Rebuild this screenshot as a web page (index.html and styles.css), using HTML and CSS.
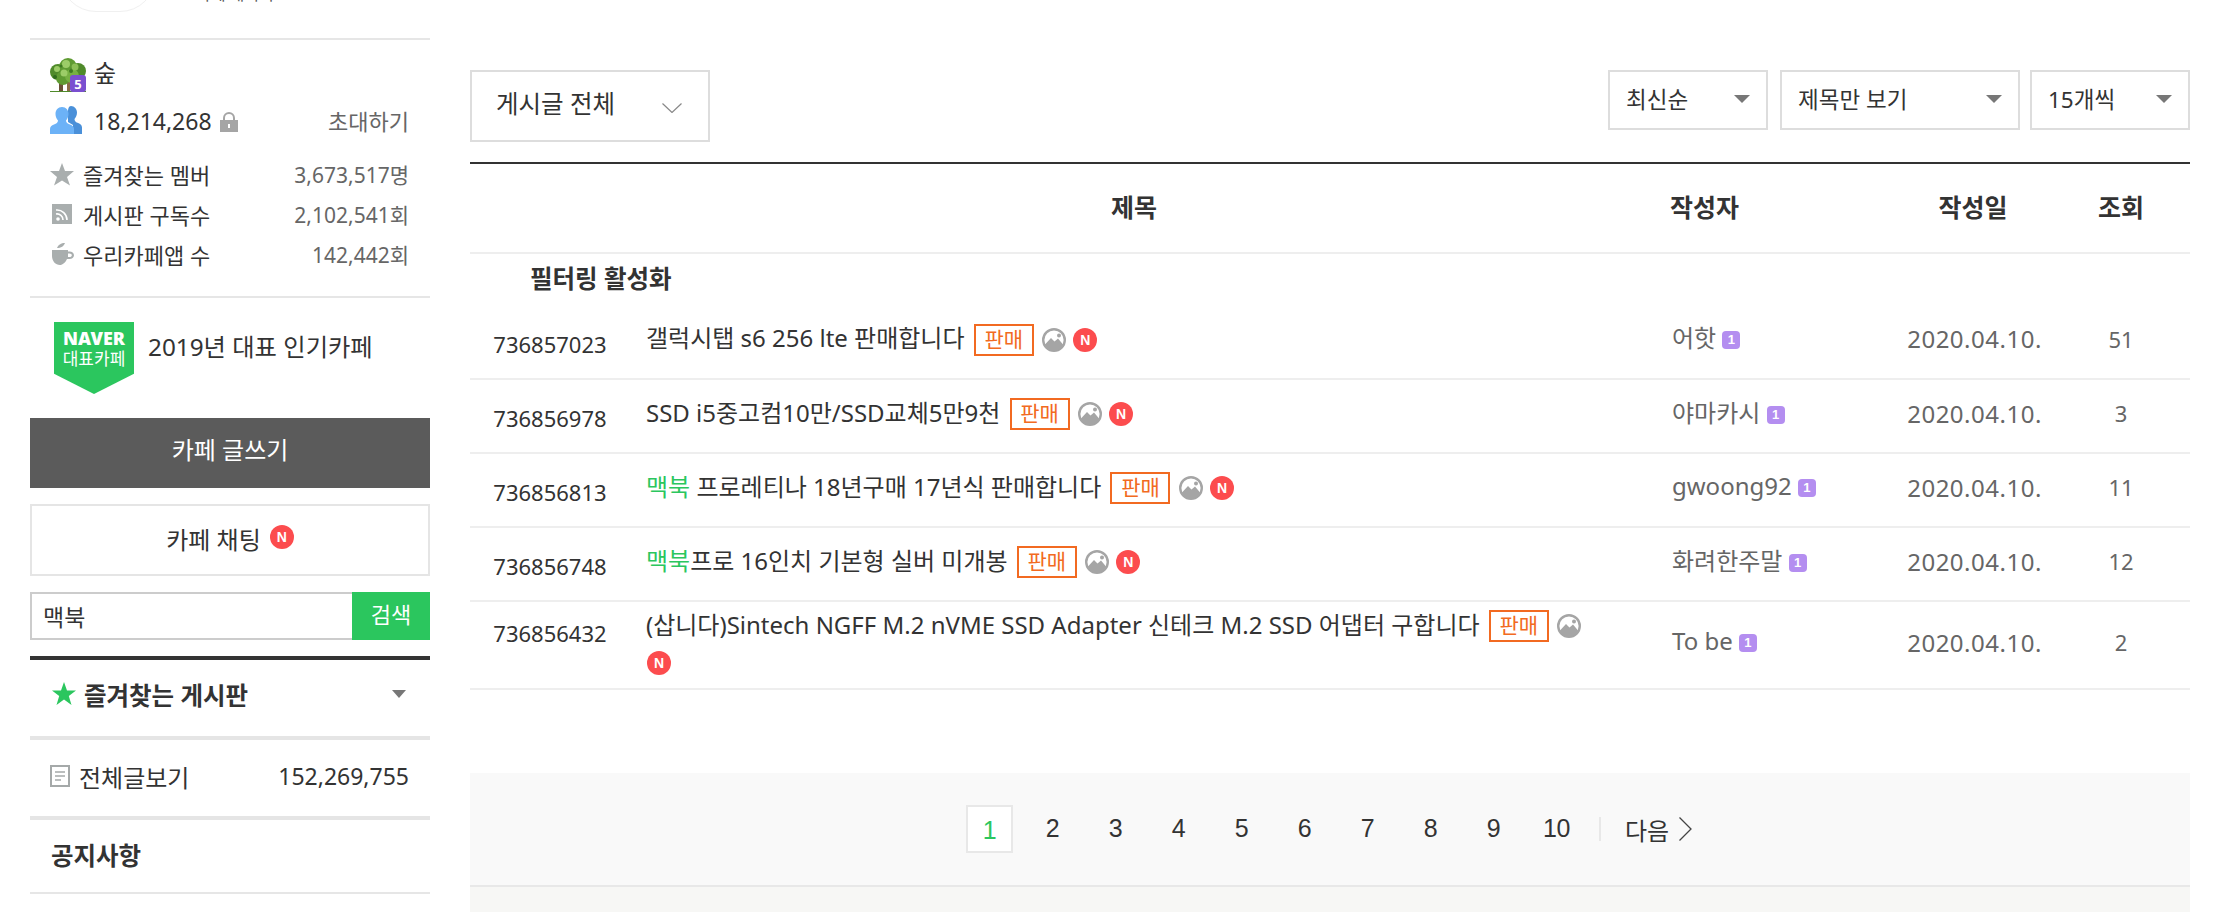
FILE: index.html
```html
<!DOCTYPE html>
<html lang="ko">
<head>
<meta charset="utf-8">
<title>게시글 목록</title>
<link rel="stylesheet" href="styles.css">
</head>
<body>
<div class="page">
  <aside class="side">
    <div class="cafe-top">
      <div class="avatar"></div>
      <div class="cafe-name">카페 매니저</div>
    </div>
    <section class="info">
      <div class="rank">
        <svg class="tree" viewBox="0 0 36 34">
          <rect x="9" y="22" width="4" height="12" fill="#6b5138"/><rect x="17" y="24" width="3" height="10" fill="#8a6a48"/>
          <circle cx="8" cy="14" r="8" fill="#4f8a2a"/><circle cx="18" cy="9" r="9" fill="#5f9b32"/><circle cx="28" cy="13" r="8" fill="#4f8a2a"/><circle cx="13" cy="20" r="7" fill="#5f9b32"/><circle cx="22" cy="18" r="7" fill="#77b043"/>
          <circle cx="16" cy="6" r="4" fill="#9ccc68"/><circle cx="7" cy="11" r="3" fill="#9ccc68"/><circle cx="25" cy="9" r="3.500" fill="#8cc057"/><circle cx="14" cy="15" r="3.500" fill="#9ccc68"/><circle cx="5" cy="19" r="2" fill="#2f6b1c"/><circle cx="21" cy="13" r="2" fill="#3f7a22"/><circle cx="11" cy="8" r="1.500" fill="#3f7a22"/>
          <rect y="33" width="36" height="1" fill="#4f8a2a"/>
          <rect x="20" y="17" width="16" height="17" rx="3" fill="#7a4fd0"/>
          <text x="28" y="31" class="tree-num">5</text>
        </svg>
        <span>숲</span>
      </div>
      <div class="members">
        <svg class="people" viewBox="0 0 32 28">
          <path d="M21 0c3.500 0 6 3 6 6.500 0 3-1.200 5-2.500 6.500 0 2 1 3 3 3.800 2.500 1 4.500 2 4.500 4.700V28h-9V19l-5-3V6.500C18 3 18.500 0 21 0z" fill="#4a90d9"/>
          <path d="M12 1c4 0 6.500 3 6.500 7 0 3-1.200 5-2.500 6.500 0 2 1.500 3 4 4 2.500 1 4 2.200 4 4.500V28H0v-5c0-2.300 1.500-3.500 4-4.500 2.500-1 4-2 4-4C6.700 13 5.500 11 5.500 8c0-4 2.500-7 6.500-7z" fill="#6cb2f7"/>
        </svg>
        <span class="count">18,214,268</span>
        <svg class="lock" viewBox="0 0 18 20">
          <path d="M4 9V6a5 5 0 0 1 10 0v3" fill="none" stroke="#a5a5a5" stroke-width="2"/>
          <path d="M0 8h18v12H0z" fill="#a5a5a5"/><rect x="8" y="12" width="2" height="4" fill="#fff"/>
        </svg>
        <span class="invite">초대하기</span>
      </div>
      <ul class="stats">
        <li>
          <svg class="stat-ico" viewBox="0 0 24 24"><path d="M12 1l3 8h9l-7 6 3 8.500-8-5-8 5 3-8.500-7-6h9z" fill="#a9aeae"/></svg>
          <span class="stat-label">즐겨찾는 멤버</span><span class="stat-val">3,673,517명</span>
        </li>
        <li>
          <svg class="stat-ico" viewBox="0 0 24 24"><rect x="2" y="2" width="20" height="20" fill="#a9aeae"/><circle cx="8" cy="17" r="1.800" fill="#fff"/><path d="M6 12a6 6 0 0 1 7 6M6 8a10 10 0 0 1 11 10" fill="none" stroke="#fff" stroke-width="1.600"/></svg>
          <span class="stat-label">게시판 구독수</span><span class="stat-val">2,102,541회</span>
        </li>
        <li>
          <svg class="stat-ico" viewBox="0 0 24 24"><path d="M7 6c1-3 4-5 8-5-1 3-4 5-8 5z" fill="#a9aeae"/><path d="M2 8h16v1.500h1.500c2.500 0 4.500 1.700 4.500 3.800S22 17 19.500 17H17c-1.500 3.500-4.500 6-7 6-4.500 0-8-4-8-9z" fill="#a9aeae"/><path d="M18 11.500h1.500c1.300 0 2.300.800 2.300 1.800s-1 1.800-2.300 1.800H18z" fill="#fff"/></svg>
          <span class="stat-label">우리카페앱 수</span><span class="stat-val">142,442회</span>
        </li>
      </ul>
    </section>
    <section class="award">
      <div class="ribbon"><b>NAVER</b><span>대표카페</span></div>
      <span class="award-text">2019년 대표 인기카페</span>
    </section>
    <a class="btn-write">카페 글쓰기</a>
    <a class="btn-chat">카페 채팅 <i class="new new-side">N</i></a>
    <form class="search">
      <input class="search-input" value="맥북">
      <span class="search-btn">검색</span>
    </form>
    <div class="fav-head">
      <svg class="fav-star" viewBox="0 0 24 24"><path d="M12 0l3 8.500h9l-7.200 5.500 2.700 9L12 17.500 4.500 23l2.700-9L0 8.500h9z" fill="#2bc65e"/></svg>
      <strong>즐겨찾는 게시판</strong>
      <i class="arrow fav-arrow"></i>
    </div>
    <div class="all-row">
      <svg class="doc" viewBox="0 0 20 22"><path d="M1 1h18v20H1z" fill="none" stroke="#a5a9a9" stroke-width="2"/><path d="M5 7h10M5 11h10M5 15h6" stroke="#a5a9a9" stroke-width="1.500"/></svg>
      <span class="all-label">전체글보기</span>
      <span class="all-val">152,269,755</span>
    </div>
    <div class="notice">공지사항</div>
  </aside>

  <main class="main">
    <div class="toolbar">
      <div class="sel-big">
        <span>게시글 전체</span>
        <svg class="chev" viewBox="0 0 20 10"><path d="M.5.500 10 9.500 19.500.500" fill="none" stroke="#888" stroke-width="1.200"/></svg>
      </div>
      <div class="sel-group">
        <div class="sel sel-a"><span>최신순</span><i class="arrow"></i></div>
        <div class="sel sel-b"><span>제목만 보기</span><i class="arrow"></i></div>
        <div class="sel sel-c"><span>15개씩</span><i class="arrow"></i></div>
      </div>
    </div>
    <table class="list">
      <colgroup><col class="c-num"><col class="c-title"><col class="c-author"><col class="c-date"><col class="c-views"></colgroup>
      <thead>
        <tr><th></th><th class="th-title">제목</th><th class="th-author">작성자</th><th>작성일</th><th>조회</th></tr>
      </thead>
      <tbody>
        <tr class="filter"><td></td><td colspan="4"><strong class="filter-label">필터링 활성화</strong></td></tr>
        <tr>
          <td class="num">736857023</td>
          <td class="title">갤럭시탭 s6 256 lte 판매합니다 <span class="tag">판매</span> <svg class="pic" viewBox="0 0 24 24"><use href="#pic"/></svg> <i class="new">N</i></td>
          <td class="author">어핫 <i class="lv">1</i></td><td class="date">2020.04.10.</td><td class="views">51</td>
        </tr>
        <tr>
          <td class="num">736856978</td>
          <td class="title">SSD i5중고컴10만/SSD교체5만9천 <span class="tag">판매</span> <svg class="pic" viewBox="0 0 24 24"><use href="#pic"/></svg> <i class="new">N</i></td>
          <td class="author">야마카시 <i class="lv">1</i></td><td class="date">2020.04.10.</td><td class="views">3</td>
        </tr>
        <tr>
          <td class="num">736856813</td>
          <td class="title"><em class="hl">맥북</em> 프로레티나 18년구매 17년식 판매합니다 <span class="tag">판매</span> <svg class="pic" viewBox="0 0 24 24"><use href="#pic"/></svg> <i class="new">N</i></td>
          <td class="author">gwoong92 <i class="lv">1</i></td><td class="date">2020.04.10.</td><td class="views">11</td>
        </tr>
        <tr>
          <td class="num">736856748</td>
          <td class="title"><em class="hl">맥북</em>프로 16인치 기본형 실버 미개봉 <span class="tag">판매</span> <svg class="pic" viewBox="0 0 24 24"><use href="#pic"/></svg> <i class="new">N</i></td>
          <td class="author">화려한주말 <i class="lv">1</i></td><td class="date">2020.04.10.</td><td class="views">12</td>
        </tr>
        <tr class="tall">
          <td class="num">736856432</td>
          <td class="title">(삽니다)Sintech NGFF M.2 nVME SSD Adapter 신테크 M.2 SSD 어댑터 구합니다 <span class="tag">판매</span> <svg class="pic" viewBox="0 0 24 24"><use href="#pic"/></svg> <i class="new">N</i></td>
          <td class="author">To be <i class="lv">1</i></td><td class="date">2020.04.10.</td><td class="views">2</td>
        </tr>
      </tbody>
    </table>
    <nav class="pager">
      <a class="cur">1</a><a>2</a><a>3</a><a>4</a><a>5</a><a>6</a><a>7</a><a>8</a><a>9</a><a>10</a>
      <span class="next">다음 <svg class="next-ico" viewBox="0 0 13 24"><path d="M.5.500 12 12 .5 23.500" fill="none" stroke="#444" stroke-width="1.300"/></svg></span>
    </nav>
    <div class="foot"></div>
  </main>
</div>
<svg class="defs" width="0" height="0"><defs><g id="pic"><circle cx="12" cy="12" r="10.800" fill="#fff" stroke="#a5a5a5" stroke-width="2.400"/><path d="M2.500 17 9 10l3.500 3.500L16 10.500l5.500 6.500A11 11 0 0 1 12 23a11 11 0 0 1-9.500-6z" fill="#a5a5a5"/><circle cx="17" cy="7.500" r="2" fill="#a5a5a5"/></g></defs></svg>
</body>
</html>
```

FILE: styles.css
```css
* { box-sizing: border-box; }
html, body { margin: 0; height: 912px; overflow: hidden; background: #fff; }
body { font-family: "Noto Sans", "Noto Sans CJK KR", sans-serif; color: #333; font-size: 24px; }
ul { list-style: none; margin: 0; padding: 0; }
i, em { font-style: normal; }
.defs { display: block; }
.page { display: flex; gap: 40px; padding-left: 30px; width: 2190px; height: 912px; }

/* sidebar */
.side { width: 400px; flex: none; }
.cafe-top { height: 40px; border-bottom: 2px solid #e6e6e6; overflow: hidden; display: flex; gap: 40px; padding-left: 30px; }
.avatar { width: 96px; height: 96px; margin-top: -84px; border-radius: 36px; border: 1px solid #f0f0f0; flex: none; }
.cafe-name { font-size: 16px; line-height: 16px; margin-top: -14px; color: #555; }
.info { height: 258px; border-bottom: 2px solid #e6e6e6; padding: 18px 21px 0 20px; }
.rank { display: flex; align-items: center; gap: 8px; height: 34px; line-height: 28px; }
.rank span { margin-top: -4px; }
.tree { width: 36px; height: 34px; flex: none; }
.tree-num { font: 700 13px "Noto Sans", sans-serif; fill: #fff; text-anchor: middle; }
.members { display: flex; align-items: center; height: 28px; margin-top: 14px; }
.count { font-size: 23px; margin-left: 12px; padding-top: 2px; }
.people { width: 32px; height: 28px; flex: none; }
.lock { width: 18px; height: 20px; margin: 4px 0 0 8px; flex: none; }
.invite { margin-left: auto; font-size: 22px; color: #666; }
.stats { margin-top: 20px; }
.stats li { display: flex; align-items: center; height: 40px; }
.stat-ico { width: 24px; height: 24px; flex: none; margin-right: 9px; }
.stat-label { font-size: 22px; }
.stat-val { margin-left: auto; font-size: 21px; color: #666; }
.award { display: flex; align-items: flex-start; gap: 14px; height: 120px; padding: 24px 0 0 24px; }
.ribbon { width: 80px; height: 72px; background: #2bc65e; color: #fff; display: flex; flex-direction: column; align-items: center; clip-path: polygon(0 0, 100% 0, 100% 72%, 50% 100%, 0 72%); }
.ribbon b { font-size: 18px; font-weight: 900; line-height: 16px; margin-top: 8px; }
.ribbon span { font-size: 17px; line-height: 20px; margin-top: 3px; white-space: nowrap; }
.award-text { line-height: 32px; margin-top: 9px; font-size: 24.300px; }
.btn-write { display: block; height: 70px; background: #5b5b5b; color: #fff; text-align: center; line-height: 64px; }
.btn-chat { display: flex; align-items: center; justify-content: center; gap: 8px; height: 72px; margin-top: 16px; border: 2px solid #e5e5e5; padding-bottom: 4px; }
.search { display: flex; height: 48px; margin: 16px 0 0; }
.search-input { flex: 1; min-width: 0; border: 2px solid #ccc; border-right: 0; padding: 0 11px; font: inherit; font-size: 23px; color: #333; outline: none; }
.search-btn { width: 78px; background: #2bc65e; color: #fff; text-align: center; line-height: 44px; font-size: 22px; }
.fav-head { display: flex; align-items: center; height: 84px; margin-top: 16px; border-top: 4px solid #333; border-bottom: 4px solid #e5e5e5; padding: 0 24px 8px 22px; }
.fav-star { width: 24px; height: 24px; margin-right: 8px; flex: none; }
.fav-head strong { font-weight: 700; font-size: 24.500px; }
.arrow { width: 0; height: 0; border-style: solid; border-width: 8px 8px 0; border-color: #777 transparent transparent; }
.fav-arrow { margin-left: auto; border-width: 8px 7px 0; }
.all-row { display: flex; align-items: center; height: 80px; border-bottom: 4px solid #e5e5e5; padding: 0 21px 4px 20px; }
.doc { width: 20px; height: 22px; flex: none; margin-right: 9px; }
.all-val { margin-left: auto; font-size: 23px; }
.notice { height: 74px; border-bottom: 2px solid #e6e6e6; font-weight: 700; font-size: 24.500px; line-height: 72px; padding-left: 21px; }

/* main */
.main { width: 1720px; flex: none; padding-top: 70px; }
.toolbar { display: flex; justify-content: space-between; align-items: flex-start; height: 94px; border-bottom: 2px solid #333; }
.sel-big { width: 240px; height: 72px; border: 2px solid #ddd; display: flex; align-items: center; padding: 0 26px 7px 24px; justify-content: space-between; font-size: 24.500px; }
.chev { width: 20px; height: 10px; margin-top: 10px; }
.sel-group { display: flex; gap: 12px; }
.sel { height: 60px; border: 2px solid #ddd; display: flex; align-items: center; justify-content: space-between; font-size: 22.500px; padding: 0 16px 4px 16px; }
.sel .arrow { margin-top: 2px; }
.sel-a { width: 160px; }
.sel-b { width: 240px; }
.sel-c { width: 160px; margin-left: -2px; }
.list { width: 100%; border-collapse: collapse; table-layout: fixed; }
.c-num { width: 160px; }
.c-title { width: 980px; }
.c-author { width: 284px; }
.c-date { width: 158px; }
.c-views { width: 138px; }
.list th { height: 89px; font-weight: 700; font-size: 25px; border-bottom: 2px solid #eee; padding: 0 0 5px; }
.th-title { padding-left: 28px !important; }
.th-author { text-align: left; padding-left: 60px !important; }
.list td { padding: 0; height: 74px; border-bottom: 2px solid #eee; vertical-align: middle; }
.filter td { height: 52px; border-bottom: 0; padding-bottom: 4px; }
.filter-label { font-weight: 700; font-size: 24.500px; margin-left: -100px; }
.tall td { height: 88px; }
.num { text-align: center; font-size: 22px; padding-top: 4px !important; }
.tall .num { padding: 0 0 24px !important; }
.title { padding: 0 16px 3px 16px !important; line-height: 34px; }
.author { padding: 0 0 10px 62px !important; color: #666; }
.date { text-align: center; color: #666; letter-spacing: .5px; padding: 0 0 6px 3px !important; }
.views { text-align: center; color: #666; font-size: 22px; padding-bottom: 6px !important; }
.hl { color: #2bc65e; }
.tag { display: inline-block; width: 60px; height: 32px; margin: 0 0 3px 3px; line-height: 27px; border: 2px solid #f26a21; color: #f26a21; font-size: 21px; text-align: center; vertical-align: middle; }
.pic { width: 24px; height: 24px; margin: 0 0 3px 2px; vertical-align: middle; }
.new { display: inline-flex; width: 24px; height: 24px; margin: 0 0 3px 1px; border-radius: 50%; background: #fc4c4e; color: #fff; font: 700 14px/24px "Liberation Sans", sans-serif; align-items: center; justify-content: center; vertical-align: middle; }
.lv { display: inline-flex; width: 18px; height: 18px; border-radius: 4px; background: #b48ef0; color: #fff; font: 700 13px/18px "Liberation Sans", sans-serif; align-items: center; justify-content: center; vertical-align: 3px; }
.pager { display: flex; align-items: center; height: 114px; margin-top: 83px; background: #f9f9f9; border-bottom: 2px solid #e8e8e8; padding-left: 496px; font-family: "Liberation Sans", "Noto Sans CJK KR", sans-serif; font-size: 25px; }
.pager a { width: 47px; height: 48px; margin-right: 16px; line-height: 46px; text-align: center; letter-spacing: -.5px; }
.pager .cur { border: 2px solid #e8e8e8; background: #fff; color: #2bc65e; }
.next { display: flex; align-items: center; gap: 10px; border-left: 2px solid #e8e8e8; height: 24px; padding-left: 24px; margin-left: 3px; font-family: "Noto Sans CJK KR", sans-serif; font-size: 24px; }
.next-ico { width: 13px; height: 24px; }
.foot { height: 30px; background: #f7f7f5; }
```
